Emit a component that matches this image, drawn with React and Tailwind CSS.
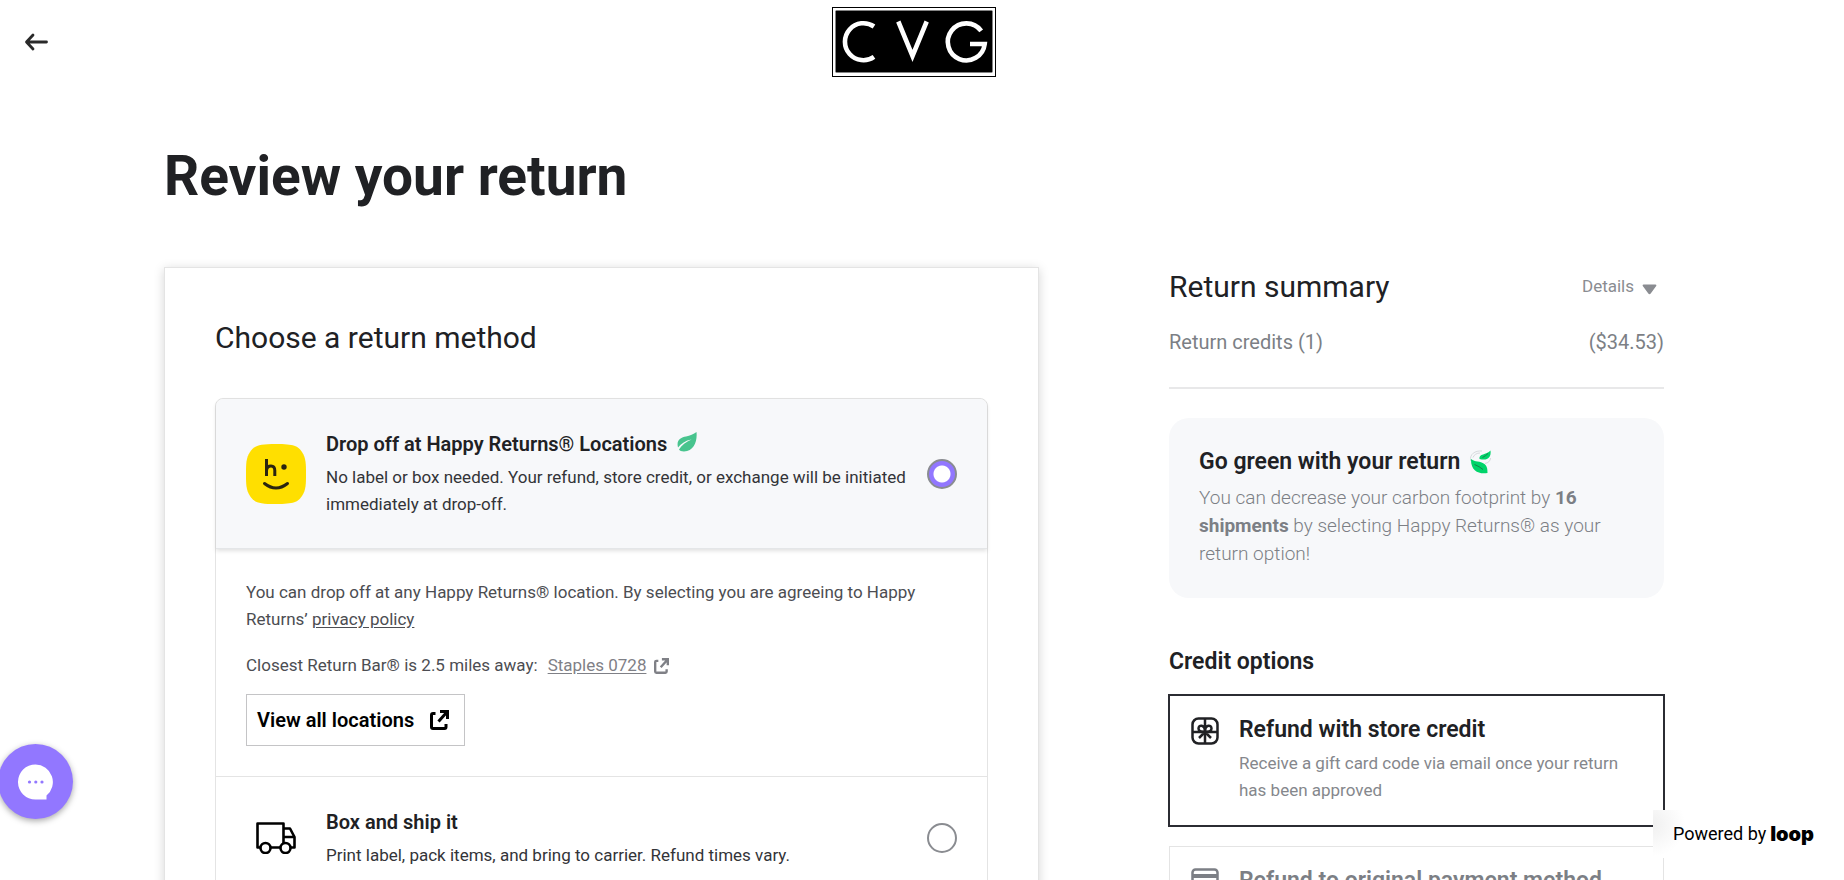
import { useState } from 'react';
import clsx from 'clsx';

export default function App() {
  const [method, setMethod] = useState('happy');
  const [credit, setCredit] = useState('store');

  return (
    <div className="h-screen overflow-y-auto bg-white pr-4 font-[Roboto,sans-serif] text-[#202124] [scrollbar-width:none]">
      <header className="grid grid-cols-3 items-center px-6 pt-[7px] pb-2">
        <button aria-label="Back" className="justify-self-start">
          <BackArrow />
        </button>
        <Logo />
      </header>

      <main className="mx-auto max-w-[1500px]">
        <h1 className="pt-[58px] text-[55px] leading-[66px] font-bold">Review your return</h1>

        <div className="mt-[58px] flex items-start justify-between">
          <section className="w-7/12 border border-[#e4e4e4] px-[50px] pt-[47px] pb-12 shadow-[0_2px_10px_rgba(0,0,0,0.17)]">
            <h2 className="text-[30px] leading-[45px] font-normal">Choose a return method</h2>

            <div className="mt-[38px] rounded-t-lg border border-[#e4e4e4]">
              <MethodOption
                value="happy"
                title="Drop off at Happy Returns® Locations"
                badge={<Leaf />}
                text="No label or box needed. Your refund, store credit, or exchange will be initiated immediately at drop-off."
                icon={<HappyReturns />}
                selected={method === 'happy'}
                onSelect={setMethod}
              />
              {method === 'happy' && (
                <div className="border-b border-[#e4e4e4] p-[30px] text-[17px] leading-[27px] text-[#4c4d52]">
                  <p>
                    You can drop off at any Happy Returns® location. By selecting you are agreeing to Happy
                    Returns’ <a href="#privacy" className="underline underline-offset-2">privacy policy</a>
                  </p>
                  <p className="mt-[19px] flex items-center">
                    Closest Return Bar® is 2.5 miles away:
                    <a href="#staples" className="ml-[10px] flex items-center gap-2 text-[#7f8086]">
                      <span className="underline underline-offset-2">Staples 0728</span>
                      <External className="h-4 w-[15px]" />
                    </a>
                  </p>
                  <button className="mt-[15px] flex h-[52px] items-center gap-4 border border-[#c4c4c6] pr-[15px] pl-[10px] text-xl font-semibold text-black">
                    View all locations
                    <External className="h-5 w-[19px]" />
                  </button>
                </div>
              )}
              <MethodOption
                value="ship"
                title="Box and ship it"
                text="Print label, pack items, and bring to carrier. Refund times vary."
                icon={<Truck />}
                selected={method === 'ship'}
                onSelect={setMethod}
              />
            </div>
          </section>

          <aside className="w-[33%]">
            <div className="flex items-center justify-between">
              <h2 className="text-[30px] leading-10 font-normal">Return summary</h2>
              <button className="flex items-center gap-2 pr-[7px] text-[17px] text-[#8a8c91]">
                Details
                <svg viewBox="0 0 15 11" className="mt-1 h-[11px] w-[15px]" fill="currentColor">
                  <path d="M1.5 0.5h12q1.5 0.300.7 1.6l-5.500 7.400q-1.200 1.400-2.400 0l-5.500-7.400q-.8-1.300.7-1.600z" />
                </svg>
              </button>
            </div>
            <div className="mt-5 flex justify-between text-xl leading-[30px] text-[#7c7f85]">
              <span>Return credits (1)</span>
              <span>($34.53)</span>
            </div>
            <hr className="mt-[30px] border-t-2 border-[#e8e8e9]" />

            <div className="mt-[29px] rounded-[20px] bg-[#f7f8fa] p-[30px]">
              <h3 className="flex items-center gap-[10px] text-[23px] leading-7 font-semibold">
                Go green with your return
                <Leaves />
              </h3>
              <p className="mt-2 text-[19px] leading-7 font-light text-[#7c7f85]">
                You can decrease your carbon footprint by <b className="font-bold">16 shipments</b> by
                selecting Happy Returns® as your return option!
              </p>
            </div>

            <fieldset className="mt-[49px]">
              <legend className="text-[23px] leading-[30px] font-semibold">Credit options</legend>
              <CreditOption
                value="store"
                title="Refund with store credit"
                text="Receive a gift card code via email once your return has been approved"
                icon={<Gift />}
                selected={credit === 'store'}
                onSelect={setCredit}
              />
              <CreditOption
                value="original"
                title="Refund to original payment method"
                text="Receive your refund once your return has been approved"
                icon={<CardIcon />}
                selected={credit === 'original'}
                onSelect={setCredit}
              />
            </fieldset>
          </aside>
        </div>
      </main>

      <button
        aria-label="Chat"
        className="fixed bottom-[61px] -left-0.5 flex size-[75px] items-center justify-center rounded-full bg-[#9277ff] shadow-[0_2px_6px_rgba(0,0,0,0.35)]"
      >
        <svg viewBox="0 0 36 36" className="size-9">
          <path d="M17.500 .5a17.500 17.500 0 1 0 0 35H28.500V31.500A17.500 17.500 0 0 0 17.500 .5z" fill="#fff" />
          <g fill="#9277ff">
            <circle cx="11.500" cy="18" r="1.600" />
            <circle cx="17.800" cy="18" r="1.600" />
            <circle cx="24" cy="18" r="1.600" />
          </g>
        </svg>
      </button>

      <a
        href="#loop"
        className="fixed right-4 bottom-[22px] flex h-12 items-center gap-1 bg-white bg-[radial-gradient(circle_at_0_30%,#f0f0f0,transparent_32px)] pr-[14px] pl-5 text-lg text-black"
      >
        Powered by <span className="font-[Inter,sans-serif] text-xl font-black">loop</span>
      </a>
    </div>
  );
}

function MethodOption({ value, title, badge, text, icon, selected, onSelect }) {
  return (
    <label
      className={clsx(
        'flex cursor-pointer items-center rounded-t-lg p-[30px]',
        selected && 'border-b border-[#e4e6e8] bg-[#f7f8fa] shadow-[0_2px_4px_rgba(0,0,0,0.12)]',
      )}
    >
      <span className="flex w-[60px] shrink-0 justify-center">{icon}</span>
      <span className="ml-5 flex-1">
        <span className="flex items-center gap-[10px] text-xl leading-[30px] font-semibold">
          {title}
          {badge}
        </span>
        <span className="mt-[5px] block text-[17px] leading-[27px] text-[#333438]">{text}</span>
      </span>
      <input
        type="radio"
        name="method"
        value={value}
        checked={selected}
        onChange={() => onSelect(value)}
        className="size-[30px] shrink-0 appearance-none rounded-full border-2 border-[#8a8c91] bg-white checked:bg-[radial-gradient(circle,#fff_8px,#9277ff_9px)]"
      />
    </label>
  );
}

function CreditOption({ value, title, text, icon, selected, onSelect }) {
  return (
    <label
      className={clsx(
        'mt-5 flex cursor-pointer gap-5 border px-[21px] pt-[17px] pb-[21px] first-of-type:mt-[18px]',
        selected ? 'border-[#2b2c33] outline outline-[#2b2c33]' : 'border-[#e4e4e4] text-[#7c7f85]',
      )}
    >
      <input
        type="radio"
        name="credit"
        value={value}
        checked={selected}
        onChange={() => onSelect(value)}
        className="sr-only"
      />
      <span className="mt-1 shrink-0">{icon}</span>
      <span>
        <span className="block text-[23px] leading-[33px] font-semibold">{title}</span>
        <span className="mt-1 block text-[17px] leading-[27px] text-[#85878c]">{text}</span>
      </span>
    </label>
  );
}

function BackArrow() {
  return (
    <svg viewBox="0 0 24 18" className="h-[18px] w-6" fill="none" stroke="#2a2a2a" strokeWidth="2.800" strokeLinecap="round" strokeLinejoin="round">
      <path d="M9 2 2.500 9 9 16M3 9h19.500" />
    </svg>
  );
}

function Logo() {
  return (
    <svg viewBox="0 0 164 70" className="h-[70px] w-[164px] justify-self-center" role="img" aria-label="CVG">
      <rect x=".5" y=".5" width="163" height="69" fill="#fff" stroke="#000" />
      <rect x="3.500" y="3.500" width="157" height="62" rx="1" fill="#000" stroke="#888" strokeWidth=".6" />
      <g fill="none" stroke="#fff" strokeWidth="4.600">
        <path d="M42 19.500A18.500 18.500 0 1 0 42 49.900" />
        <path d="M66.300 14.500 80.500 49 94.700 14.500" strokeMiterlimit="10" />
        <path d="M149.200 23.900A18.500 18.500 0 1 0 152.700 37H138" />
      </g>
    </svg>
  );
}

function HappyReturns() {
  return (
    <svg viewBox="0 0 60 60" className="size-[60px]">
      <path d="M30 0C48 0 52 2 56 8C60 14 60 20 60 30S60 46 56 52C52 58 48 60 30 60S8 58 4 52C0 46 0 40 0 30S0 14 4 8C8 2 12 0 30 0z" fill="#ffdf00" />
      <g fill="none" stroke="#2a2510" strokeWidth="3">
        <path d="M20.500 15v17M20.500 26.500q.5-4.500 4.500-4.500 3.800 0 3.800 4.500v5.500" />
        <path d="M18.500 39.500q11.500 9 23 0" strokeLinecap="round" />
      </g>
      <circle cx="38" cy="23" r="2.700" fill="#2a2510" />
    </svg>
  );
}

function Leaf() {
  return (
    <svg viewBox="0 0 20 20" className="mb-1 size-5">
      <path d="M19.500 0C20.500 9 17 19 7 19.500 4.500 19.500 2.500 18.500 2 17.500 4.500 13 9 10 14.500 7.500 8.500 8.500 4 11.500 1 15.500-1 7.500 4 5.500 9 4.500 13 3.500 16.500 2.500 19.500 0z" fill="#48c48e" />
    </svg>
  );
}

function Leaves() {
  return (
    <svg viewBox="0 0 22 24" className="h-6 w-[22px]">
      <g fill="none" stroke="#d6d9dc" strokeWidth="1">
        <path d="M.5 11C-.5 4 5 .5 12 1M3 7.500C4 4.500 7 3 10 3M20.500 8C20.500 11 18 13 15 13.500" />
      </g>
      <path d="M1 9C5 12.500 10 10.500 14.500 14 17.500 16.500 17.500 20 17.500 23 9 24.500 .5 21 1 9z" fill="#00d46a" />
      <path d="M20.500 .5C21.500 8 17 11 9.500 9 8.500 3.500 16.500 5 20.500 .5z" fill="#00d46a" />
      <path d="M4.500 14.500q5 2 8.500 5M12.500 7.500q3-1.500 5.500-4" stroke="#1b7f4c" strokeWidth="1" fill="none" />
    </svg>
  );
}

function External({ className }) {
  return (
    <svg viewBox="0 0 19 20" className={className} fill="none" stroke="currentColor" strokeWidth="3">
      <path d="M5.500 3.500H3Q1.500 3.500 1.500 5V17Q1.500 18.500 3 18.500H14.500Q16 18.500 16 17V14" />
      <path d="M10 1.500H17.500V9M17 2 8.500 11.500" />
    </svg>
  );
}

function Truck() {
  return (
    <svg viewBox="0 0 40 32" className="h-8 w-10" fill="none" stroke="#000" strokeWidth="2.600" strokeLinejoin="round">
      <path d="M4 25.500H1.500V1.500H27.500V25.500H14M27.500 6.500H34L38.500 15V25.500H35M28 15H38" />
      <circle cx="9.500" cy="26" r="5" fill="#fff" />
      <circle cx="29.500" cy="26" r="5" fill="#fff" />
    </svg>
  );
}

function Gift() {
  return (
    <svg viewBox="0 0 28 28" className="size-7" fill="none" stroke="currentColor" strokeWidth="2.500">
      <rect x="1.500" y="1.500" width="25" height="25" rx="6" />
      <path d="M14 1.500v25M1.500 15h25" />
      <path d="M14 15C11 15 7.500 14.500 7.500 11.500 7.500 7.500 13.500 7.500 14 13zM14 15C17 15 20.500 14.500 20.500 11.500 20.500 7.500 14.500 7.500 14 13zM14 15 8 21M14 15 20 21" />
    </svg>
  );
}

function CardIcon() {
  return (
    <svg viewBox="0 0 28 28" className="size-7" fill="none" stroke="currentColor" strokeWidth="2.500">
      <rect x="1.500" y="1.500" width="25" height="20" rx="3" />
      <path d="M1.500 8h25" strokeWidth="4" />
    </svg>
  );
}
